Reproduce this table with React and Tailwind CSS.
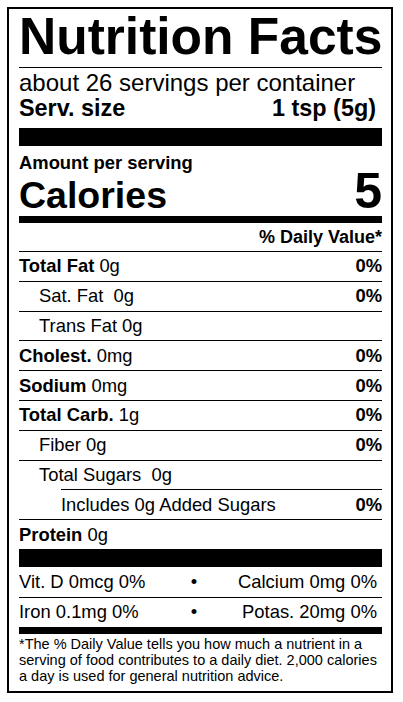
import React from "react";

const rows = [
  { bold: "Total Fat", rest: " 0g", dv: "0%" },
  { label: "Sat. Fat\u00a0 0g", dv: "0%", indent: true },
  { label: "Trans Fat 0g", indent: true },
  { bold: "Cholest.", rest: " 0mg", dv: "0%" },
  { bold: "Sodium", rest: " 0mg", dv: "0%" },
  { bold: "Total Carb.", rest: " 1g", dv: "0%" },
  { label: "Fiber 0g", dv: "0%", indent: true },
  { label: "Total Sugars\u00a0 0g", indent: true },
  { label: "Includes 0g Added Sugars", dv: "0%", sub: true },
  { bold: "Protein", rest: " 0g" },
];

function Row({ row }) {
  return (
    <div
      className={`flex h-[29.8px] items-center justify-between border-t border-black text-[18.4px] leading-[20px] ${
        row.sub ? "ml-[42px]" : ""
      } ${row.indent ? "pl-[20px]" : ""}`}
    >
      <span>
        {row.bold ? <b>{row.bold}</b> : null}
        {row.bold ? row.rest : row.label}
      </span>
      {row.dv ? <b>{row.dv}</b> : null}
    </div>
  );
}

function App() {
  return (
    <div className="min-h-screen bg-white pl-[7px] pt-[7px] font-['Liberation_Sans',Arial,sans-serif] text-black">
      <div className="h-[686px] w-[386px] border-2 border-black pl-[10px] pr-[9px]">
        {/* title */}
        <div className="h-[59px] border-b border-black pt-[2px]">
          <h1 className="text-[51.5px] font-bold leading-[51px] whitespace-nowrap">Nutrition Facts</h1>
        </div>

        {/* servings */}
        <div className="h-[28px] pt-[2px] text-[24px] leading-[25px] whitespace-nowrap">
          about 26 servings per container
        </div>
        <div className="flex h-[25px] justify-between pr-[6px] text-[23.4px] font-bold leading-[25px]">
          <span>Serv. size</span>
          <span>1 tsp (5g)</span>
        </div>

        <div className="mt-[7px] h-[18px] bg-black" />

        {/* calories */}
        <div className="mt-[7px] text-[18.4px] font-bold leading-[19px]">Amount per serving</div>
        <div className="flex h-[44px] items-baseline justify-between font-bold">
          <span className="text-[37.5px] leading-[38px]">Calories</span>
          <span className="text-[50px] leading-[38px]">5</span>
        </div>

        <div className="h-[7px] bg-black" />

        <div className="h-[28px] pt-[4px] text-right text-[18px] font-bold leading-[20px]">
          % Daily Value*
        </div>

        {rows.map((r, i) => (
          <Row key={i} row={r} />
        ))}

        <div className="h-[18px] bg-black" />

        {/* vitamins */}
        <div className="flex h-[31px] items-center border-b border-black text-[18.4px] leading-[20px]">
          <span className="w-[171px]">Vit. D 0mcg 0%</span>
          <span className="w-[8px] text-center">•</span>
          <span className="flex-1 pr-[5px] text-right">Calcium 0mg 0%</span>
        </div>
        <div className="flex h-[29px] items-center text-[18.4px] leading-[20px]">
          <span className="w-[171px]">Iron 0.1mg 0%</span>
          <span className="w-[8px] text-center">•</span>
          <span className="flex-1 pr-[5px] text-right">Potas. 20mg 0%</span>
        </div>

        <div className="h-[7px] bg-black" />

        {/* footnote */}
        <p className="pt-[2px] text-[14.5px] leading-[16px]">
          <span className="block whitespace-nowrap">*The % Daily Value tells you how much a nutrient in a</span>
          <span className="block whitespace-nowrap">serving of food contributes to a daily diet. 2,000 calories</span>
          <span className="block whitespace-nowrap">a day is used for general nutrition advice.</span>
        </p>
      </div>
    </div>
  );
}

export default App;
